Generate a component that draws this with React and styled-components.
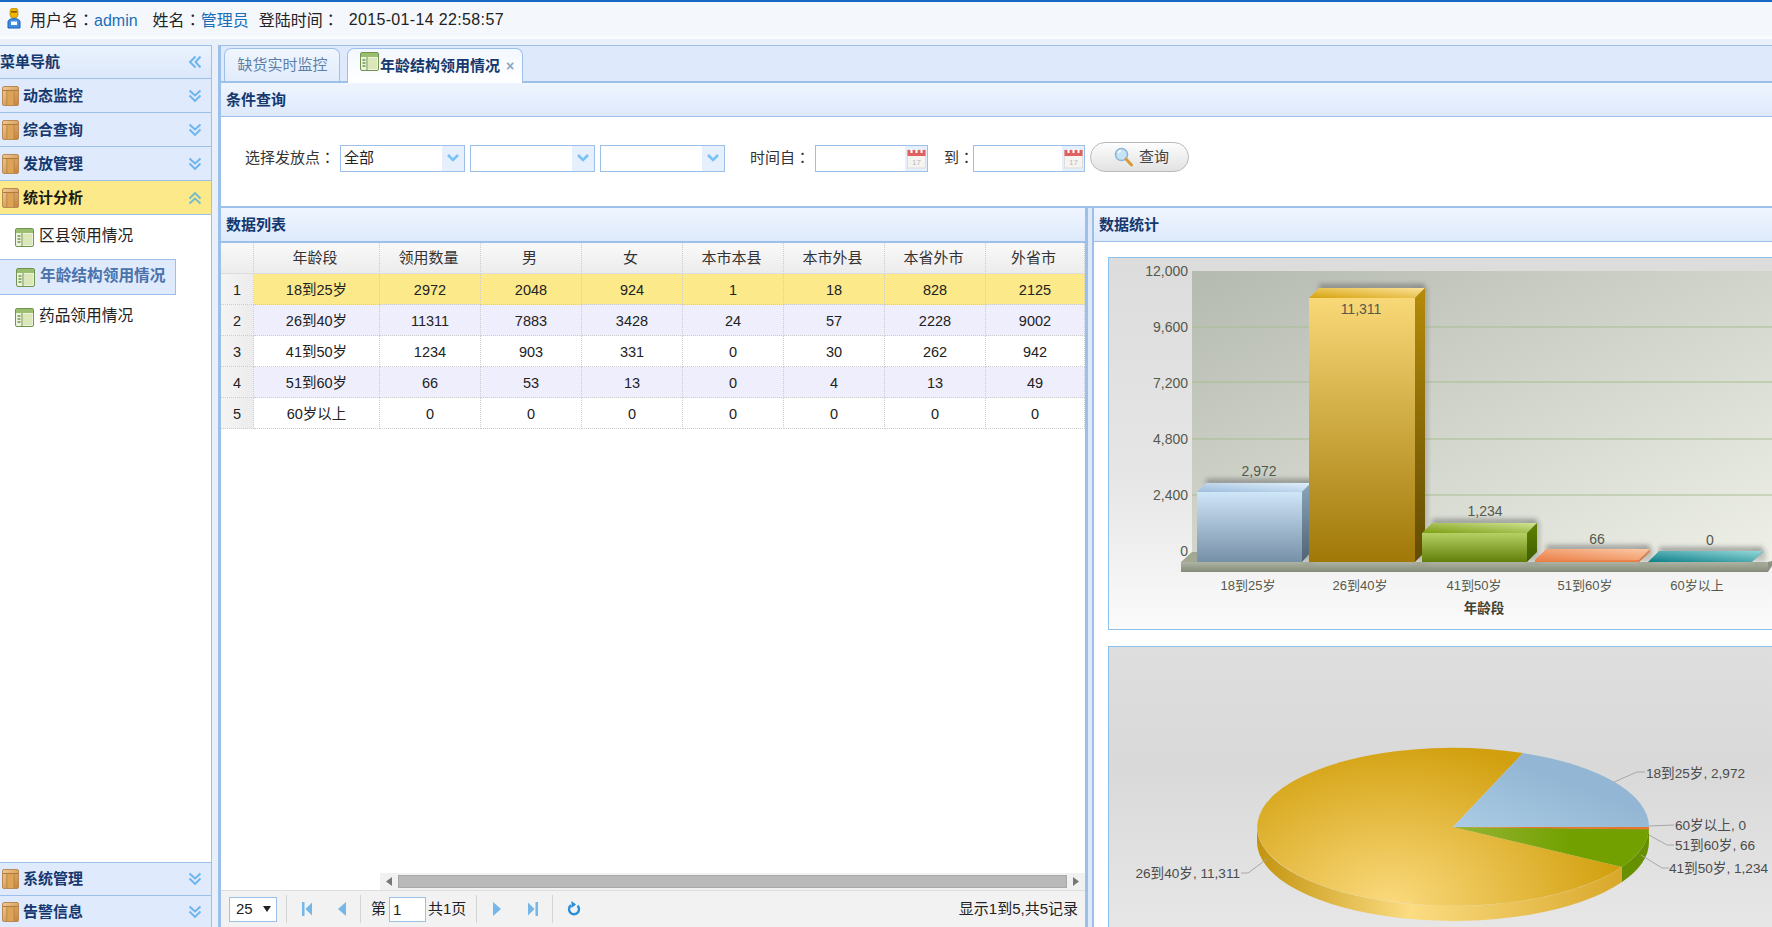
import React from "react";
import styled, { createGlobalStyle } from "styled-components";

const GlobalStyle = createGlobalStyle`
  html, body {
    margin: 0;
    padding: 0;
    background: #e9f0f9;
    overflow: hidden;
  }
  * {
    box-sizing: border-box;
  }
`;

const LINE = "#9dc0ea";
const FONT = `"Liberation Sans", "Noto Sans CJK SC", sans-serif`;

// 表格数据
const columns = ["年龄段", "领用数量", "男", "女", "本市本县", "本市外县", "本省外市", "外省市"];
const rows = [
  ["18到25岁", 2972, 2048, 924, 1, 18, 828, 2125],
  ["26到40岁", 11311, 7883, 3428, 24, 57, 2228, 9002],
  ["41到50岁", 1234, 903, 331, 0, 30, 262, 942],
  ["51到60岁", 66, 53, 13, 0, 4, 13, 49],
  ["60岁以上", 0, 0, 0, 0, 0, 0, 0],
];

const Page = styled.div`
  width: 1772px;
  height: 927px;
  display: flex;
  flex-direction: column;
  overflow: hidden;
  font-family: ${FONT};
  line-height: 20px;
  color: #222;
  background: #e9f0f9;
`;

const TopBar = styled.div`
  height: 39px;
  flex: none;
  display: flex;
  align-items: center;
  padding: 2px 0 0 7px;
  font-size: 16px;
  background: #f4f8fc;
  border-top: 2px solid #1668c4;
  border-bottom: 3px solid #fbfcfe;
`;

const TopIcon = styled.span`
  display: flex;
  margin-top: -4px;
`;

const TopText = styled.span`
  margin-left: ${(p) => p.$ml || 0}px;
  white-space: pre;
  letter-spacing: ${(p) => p.$track || 0}px;
`;

const TopLink = styled.span`
  color: #1c6db8;
`;

// 全角冒号居中显示
const Colon = styled.span`
  font-family: "Noto Sans CJK TC", sans-serif;
`;

const Layout = styled.div`
  flex: 1;
  display: flex;
  min-height: 0;
  padding-top: 6px;
`;

const Sidebar = styled.aside`
  width: 212px;
  flex: none;
  display: flex;
  flex-direction: column;
  background: #fff;
  border-right: 1px solid ${LINE};
  overflow: hidden;
`;

const SideHead = styled.div`
  height: 34px;
  flex: none;
  display: flex;
  align-items: center;
  justify-content: space-between;
  padding: 0 9px 0 0;
  font-size: 15px;
  font-weight: bold;
  color: #15386e;
  background: linear-gradient(#eaf2fe, #dbe8fb);
  border-top: 1px solid ${LINE};
  border-bottom: 1px solid ${LINE};
`;

const SideRow = styled.div`
  height: ${(p) => p.$h || 34}px;
  flex: none;
  display: flex;
  align-items: center;
  padding: 0 9px 0 2px;
  font-size: 15px;
  font-weight: bold;
  color: ${(p) => (p.$open ? "#1b1b10" : "#15386e")};
  background: ${(p) => (p.$open ? "#fbe98a" : "#dfeafc")};
  border-bottom: 1px solid ${LINE};
`;

const SideTitle = styled.span`
  flex: 1;
  margin-left: 4px;
`;

const MenuList = styled.div`
  flex: 1;
  display: flex;
  flex-direction: column;
  gap: 4px;
  padding-top: 4px;
`;

const BottomGroup = styled.div`
  flex: none;
  height: 65px;
  border-top: 1px solid ${LINE};
`;

const MenuItem = styled.div`
  width: 176px;
  height: 36px;
  display: flex;
  align-items: center;
  gap: 5px;
  padding: 0 0 2px ${(p) => (p.$active ? 16 : 15)}px;
  font-size: 15.7px;
  font-weight: ${(p) => (p.$active ? "bold" : "normal")};
  color: ${(p) => (p.$active ? "#4a72ab" : "#222")};
  background: ${(p) => (p.$active ? "#dfeafc" : "transparent")};
  border: 1px solid ${(p) => (p.$active ? LINE : "transparent")};
  border-left: none;
`;

const MenuIcon = styled.span`
  display: flex;
  margin-top: 2px;
`;

const Main = styled.main`
  flex: 1;
  min-width: 0;
  margin-left: 6px;
  display: flex;
  flex-direction: column;
  background: #fff;
  border-left: 3px solid ${LINE};
`;

const TabStrip = styled.div`
  height: 38px;
  flex: none;
  display: flex;
  align-items: flex-start;
  gap: 7px;
  padding: 2px 0 0 3px;
  background: #deeafc;
  border-top: 1px solid ${LINE};
  border-bottom: 2px solid ${LINE};
`;

const Tab = styled.div`
  height: ${(p) => (p.$active ? 35 : 33)}px;
  width: ${(p) => (p.$active ? 176 : 116)}px;
  display: flex;
  align-items: center;
  justify-content: ${(p) => (p.$active ? "flex-start" : "center")};
  padding-left: ${(p) => (p.$active ? 12 : 1)}px;
  font-size: 15px;
  font-weight: ${(p) => (p.$active ? "bold" : "normal")};
  color: ${(p) => (p.$active ? "#15386e" : "#5c7fa8")};
  background: ${(p) => (p.$active ? "linear-gradient(#f3f8ff, #fff)" : "linear-gradient(#f0f6fe, #e0ebfb)")};
  border: 1px solid ${LINE};
  border-bottom: none;
  border-radius: 7px 7px 0 0;
  position: relative;
  z-index: 1;
`;

const TabIcon = styled.span`
  display: flex;
  margin-top: -9px;
  margin-right: 1px;
`;

const TabClose = styled.span`
  margin-left: 6px;
  font-size: 14px;
  font-weight: bold;
  color: #8ba5c4;
`;

const PanelHead = styled.div`
  height: ${(p) => (p.$thick ? 35 : 34)}px;
  flex: none;
  display: flex;
  align-items: center;
  padding-left: 5px;
  font-size: 15px;
  font-weight: bold;
  color: #15386e;
  background: linear-gradient(#eff5fe, #dde9fb);
  border-bottom: ${(p) => (p.$thick ? 2 : 1)}px solid ${LINE};
`;

const QueryForm = styled.div`
  height: 89px;
  flex: none;
  display: flex;
  align-items: center;
  gap: 5px;
  padding: 0 0 7px 24px;
`;

const FieldLabel = styled.label`
  margin-left: ${(p) => p.$ml || 0}px;
  margin-top: -1px;
  font-size: 15px;
  color: #333;
  white-space: nowrap;
`;

const Combo = styled.div`
  width: 125px;
  height: 27px;
  display: flex;
  align-items: center;
  justify-content: space-between;
  padding-left: 3px;
  font-size: 15px;
  background: #fff;
  border: 1px solid ${LINE};
`;

const ComboArrow = styled.span`
  width: 22px;
  height: 100%;
  display: flex;
  align-items: center;
  justify-content: center;
  background: #e6effc;
`;

const DateBox = styled.div`
  width: ${(p) => p.$w}px;
  height: 27px;
  margin-left: ${(p) => p.$ml || 0}px;
  display: flex;
  justify-content: flex-end;
  background: #fff;
  border: 1px solid ${LINE};
`;

const DateIcon = styled.span`
  width: 22px;
  display: flex;
  align-items: center;
  justify-content: center;
  background: #e6effc;
`;

const QueryButton = styled.button`
  width: 99px;
  height: 30px;
  margin: -3px 0 0 0;
  display: flex;
  align-items: center;
  justify-content: center;
  gap: 6px;
  padding: 0 0 0 4px;
  font-family: ${FONT};
  font-size: 15px;
  line-height: 20px;
  color: #444;
  background: linear-gradient(#fdfdfd, #e2e2e2);
  border: 1px solid #b9b9b9;
  border-radius: 15px;
`;

const Split = styled.div`
  flex: 1;
  min-height: 0;
  display: flex;
  background: #dfe9f7;
  border-top: 2px solid ${LINE};
`;

const ListPanel = styled.section`
  width: 867px;
  flex: none;
  display: flex;
  flex-direction: column;
  background: #fff;
  border-right: 3px solid ${LINE};
`;

const StatPanel = styled.section`
  flex: 1;
  min-width: 0;
  margin-left: 4px;
  display: flex;
  flex-direction: column;
  overflow: hidden;
  background: #fff;
  border-left: 2px solid ${LINE};
`;

const StatBody = styled.div`
  flex: 1;
  display: flex;
  flex-direction: column;
  gap: 16px;
  padding: 15px 0 0 14px;
`;

const ChartFrame = styled.div`
  width: 700px;
  height: ${(p) => p.$h}px;
  flex: none;
  background: ${(p) => p.$bg};
  border: 1px solid #8ac0ea;
`;

const ChartSvg = styled.svg`
  display: block;
`;

const GridBody = styled.div`
  flex: 1;
  min-height: 0;
`;

const Table = styled.table`
  width: 864px;
  table-layout: fixed;
  border-collapse: separate;
  border-spacing: 0;
  font-size: 14.5px;
  line-height: 20px;
`;

const Th = styled.th`
  width: ${(p) => p.$w}px;
  height: 31px;
  padding: 0 3px 0 0;
  font-weight: normal;
  font-size: 15px;
  color: #333;
  background: linear-gradient(#f9f9f9, #ececec);
  border-right: 1px dotted #ccc;
  border-bottom: 1px solid #ddd;
`;

const Td = styled.td`
  height: 31px;
  padding: 1px 0 0;
  text-align: center;
  color: #222;
  background: ${(p) => (p.$selected ? "#fbe98a" : p.$alt ? "#eeeefd" : "#fff")};
  border-right: 1px dotted #ccc;
  border-bottom: 1px dotted #ccc;
`;

const RowNum = styled(Td)`
  background: linear-gradient(90deg, #f4f4f4, #ececec);
`;

const ScrollBar = styled.div`
  height: 17px;
  flex: none;
  margin-left: 159px;
  display: flex;
  align-items: center;
  justify-content: space-between;
  padding: 0 6px;
  background: #f1f1f1;
`;

const ScrollThumb = styled.div`
  width: 669px;
  height: 13px;
  background: #b9b9b9;
  border: 1px solid #a8a8a8;
`;

const Pager = styled.div`
  height: 37px;
  flex: none;
  display: flex;
  align-items: center;
  padding: 0 7px 0 8px;
  font-size: 15px;
  background: #f2f2f2;
  border-top: 1px solid #ddd;
`;

const PageSize = styled.div`
  width: 48px;
  height: 25px;
  display: flex;
  align-items: center;
  justify-content: space-between;
  padding: 0 5px 0 6px;
  font-size: 15px;
  background: #fff;
  border: 1px solid ${LINE};
`;

const PagerSep = styled.span`
  width: 1px;
  height: 28px;
  flex: none;
  margin-left: ${(p) => p.$ml || 0}px;
  background: #d4d4d4;
`;

const PagerButton = styled.span`
  width: 36px;
  display: flex;
  justify-content: center;
`;

const PagerGroup = styled.div`
  width: ${(p) => p.$w}px;
  display: flex;
  align-items: center;
  padding-left: ${(p) => p.$pl || 0}px;
`;

const PageInput = styled.div`
  width: 37px;
  height: 25px;
  margin: 0 2px 0 3px;
  padding-left: 3px;
  line-height: 23px;
  background: #fff;
  border: 1px solid ${LINE};
`;

const PagerInfo = styled.div`
  margin-left: auto;
  white-space: nowrap;
`;

// 小图标
const UserIcon = () => (
  <svg width="14" height="21" viewBox="0 0 14 21">
    <path d="M3 3a4 3 0 0 1 8 0v4a4 3 0 0 1-8 0z" fill="#f0b400" stroke="#a87a00" strokeWidth=".6" />
    <rect x="4" y="3" width="6" height="1.6" fill="#8a5a00" />
    <path d="M1 20v-6c0-2 2-3.4 6-3.4s6 1.4 6 3.4v6z" fill="#3d8de0" stroke="#1c5fb0" />
    <rect x="4" y="13.5" width="6" height="3.5" fill="#fff" />
  </svg>
);

const BookIcon = () => (
  <svg width="17" height="20" viewBox="0 0 17 20">
    <defs>
      <linearGradient id="bookFill" x1="0" y1="0" x2="1" y2="1">
        <stop offset="0" stopColor="#f2cb94" />
        <stop offset="1" stopColor="#c4823c" />
      </linearGradient>
    </defs>
    <rect x=".5" y=".5" width="16" height="19" rx="1.5" fill="url(#bookFill)" stroke="#b98a55" />
    <path d="M1 4.5h15" stroke="#b07a3c" />
    <path d="M5 5v14M12 5v14" stroke="#b17a3a" />
    <rect x="5.5" y="5" width="6" height="14" fill="#dda455" />
  </svg>
);

const TableIcon = ({ size = 19 }) => (
  <svg width={size} height={size} viewBox="0 0 19 19">
    <rect x=".5" y=".5" width="18" height="18" rx="1.5" fill="#eef4dc" stroke="#6f9352" />
    <rect x="1" y="1" width="17" height="4" fill="#9bbd6e" />
    <path d="M7 5v13" stroke="#6f9352" />
    <path d="M2.5 8h3M2.5 11h3M2.5 14h3" stroke="#6f9352" strokeWidth="1.4" />
    <rect x="8" y="6" width="9" height="11" fill="#dbe7b8" />
  </svg>
);

const Chevrons = ({ dir = "down", color = "#6bb4ef" }) => {
  const turn = { down: 0, up: 180, left: 90 }[dir];
  return (
    <svg width="14" height="14" viewBox="0 0 14 14">
      <g transform={`rotate(${turn} 7 7)`} fill="none" stroke={color} strokeWidth="1.9">
        <path d="M1.5 1.5 7 6.5l5.5-5" />
        <path d="M1.5 6.5 7 12l5.5-5.5" />
      </g>
    </svg>
  );
};

const ComboChevron = () => (
  <svg width="14" height="10" viewBox="0 0 14 10">
    <path d="M2 2l5 5 5-5" fill="none" stroke="#78c2f4" strokeWidth="2.6" />
  </svg>
);

const CalendarIcon = () => (
  <svg width="19" height="21" viewBox="0 0 19 21">
    <rect x=".5" y="2" width="18" height="18" fill="#f6f4f0" stroke="#ddd" />
    <rect x=".5" y="2" width="18" height="6" fill="#e25f5f" />
    <path d="M4.5 1v4M9.5 1v4M14.5 1v4" stroke="#fff" strokeWidth="2" />
    <text x="5" y="17" fontSize="8" fill="#b9b9b9" fontFamily="Liberation Sans, sans-serif">17</text>
  </svg>
);

const SearchIcon = () => (
  <svg width="19" height="20" viewBox="0 0 19 20">
    <circle cx="7.5" cy="7.5" r="6" fill="#c5e4f8" stroke="#8cb6d8" strokeWidth="1.6" />
    <path d="M4 6a4 4 0 0 1 3-2.5" fill="none" stroke="#fff" strokeWidth="1.6" />
    <path d="M12 12l5.5 6" stroke="#d89a3c" strokeWidth="3" strokeLinecap="round" />
  </svg>
);

const PageArrow = ({ last, flip, color = "#74b7e8" }) => (
  <svg width="12" height="16" viewBox="0 0 12 16">
    <g fill={color} transform={flip ? "matrix(-1 0 0 1 12 0)" : undefined}>
      <path d={last ? "M1 1.5v13L7.5 8z" : "M2 1v14L10 8z"} />
      {last && <rect x="8.5" y="1" width="2.5" height="14" />}
    </g>
  </svg>
);

const RefreshIcon = () => (
  <svg width="14" height="16" viewBox="0 0 14 16">
    <path d="M10.5 4.6A5 5 0 1 1 4 4.2" fill="none" stroke="#2a8fd6" strokeWidth="2.4" />
    <path d="M4.5 0v7L9 3.5z" fill="#2a8fd6" />
  </svg>
);

const ScrollArrow = ({ flip }) => (
  <svg width="6" height="9" viewBox="0 0 6 9">
    <path d={flip ? "M6 0v9L0 4.5z" : "M0 0v9l6-4.5z"} fill="#777" />
  </svg>
);

// 柱状图，坐标沿用页面坐标
const axisLabels = [["12,000", 276], ["9,600", 332], ["7,200", 388], ["4,800", 444], ["2,400", 500], ["0", 556]];
const barLabels = [["2,972", 1259, 476], ["11,311", 1361, 314], ["1,234", 1485, 516], ["66", 1597, 544], ["0", 1710, 545]];
const catLabels = [["18到25岁", 1248], ["26到40岁", 1360], ["41到50岁", 1474], ["51到60岁", 1585], ["60岁以上", 1697]];

const bars = [
  { id: "a", x: 1197, w: 105, d: 9, top: 492, front: ["#cfe5f8", "#7690a8"], lid: ["#9dbddc", "#e0effb"], side: ["#8aa5bd", "#4f6372"] },
  { id: "b", x: 1309, w: 106, d: 10, top: 298, front: ["#f9d877", "#a07808"], lid: ["#d6a30e", "#fde39a"], side: ["#b58b08", "#624c05"] },
  { id: "c", x: 1422, w: 105, d: 10, top: 533, front: ["#b5d165", "#617f08"], lid: ["#7c9e12", "#cfe394"], side: ["#5d8300", "#3f5c00"] },
  { id: "d", x: 1535, w: 104, d: 11, top: 560, front: ["#ee8a50", "#e67a40"], lid: ["#e9814a", "#fdc8a4"], side: ["#e9905c", "#c56a35"] },
  { id: "e", x: 1648, w: 104, d: 11, top: 562, front: ["#0d7f88", "#0d7f88"], lid: ["#0d7f88", "#95d8da"], side: ["#5fb5b9", "#3f9297"] },
];

const BarChart = () => (
  <ChartSvg width="698" height="371" viewBox="1109 258 698 371" fontFamily={FONT}>
    <defs>
      <linearGradient id="wall" x1="0" y1="0" x2="1" y2="1">
        <stop offset="0" stopColor="#b5bab0" />
        <stop offset="1" stopColor="#f0f2ea" />
      </linearGradient>
      <linearGradient id="floor" x1="0" y1="0" x2="0" y2="1">
        <stop offset="0" stopColor="#aeb3a3" />
        <stop offset="1" stopColor="#858b78" />
      </linearGradient>
      <filter id="soft" x="-20%" y="-100%" width="140%" height="300%">
        <feGaussianBlur stdDeviation="2.5" />
      </filter>
      {bars.map((b) => (
        <React.Fragment key={b.id}>
          <linearGradient id={`front-${b.id}`} x1="0" y1="0" x2="0" y2="1">
            <stop offset="0" stopColor={b.front[0]} />
            <stop offset="1" stopColor={b.front[1]} />
          </linearGradient>
          <linearGradient id={`lid-${b.id}`} x1="0" y1="1" x2="1" y2="0">
            <stop offset="0" stopColor={b.lid[0]} />
            <stop offset="1" stopColor={b.lid[1]} />
          </linearGradient>
          <linearGradient id={`side-${b.id}`} x1="0" y1="0" x2="0" y2="1">
            <stop offset="0" stopColor={b.side[0]} />
            <stop offset="1" stopColor={b.side[1]} />
          </linearGradient>
        </React.Fragment>
      ))}
    </defs>
    <rect x="1192" y="271" width="615" height="291" fill="url(#wall)" />
    {[327, 382, 439, 495].map((y) => (
      <path key={y} d={`M1192 ${y}H1807`} stroke="#a9bd90" />
    ))}
    <path d="M1181 562l11-10h5v10z" fill="#a3a892" />
    <path d="M1768 572l4-6v-5l-4 1z" fill="#8d9280" />
    <rect x="1181" y="562" width="587" height="10" fill="url(#floor)" />
    {bars.map((b) => (
      <g key={b.id}>
        <rect x={b.x + b.d} y={b.top - b.d - 4} width={b.w} height="6" fill="#555" opacity=".5" filter="url(#soft)" />
        <rect x={b.x + b.w} y={b.top - b.d} width={b.d + 3} height={562 - b.top + b.d} fill="#666" opacity=".3" filter="url(#soft)" />
        <path d={`M${b.x} ${b.top}l${b.d} -${b.d}h${b.w}l-${b.d} ${b.d}z`} fill={`url(#lid-${b.id})`} />
        <path d={`M${b.x + b.w} ${b.top}l${b.d} -${b.d}V552l-${b.d} 10z`} fill={`url(#side-${b.id})`} />
        <rect x={b.x} y={b.top} width={b.w} height={562 - b.top} fill={`url(#front-${b.id})`} />
      </g>
    ))}
    <g fontSize="14" fill="#55594c">
      {axisLabels.map(([t, y]) => (
        <text key={t} x="1188" y={y} textAnchor="end">{t}</text>
      ))}
      {barLabels.map(([t, x, y]) => (
        <text key={t + x} x={x} y={y} textAnchor="middle">{t}</text>
      ))}
      {catLabels.map(([t, x]) => (
        <text key={t} x={x} y="590" fontSize="13" textAnchor="middle">{t}</text>
      ))}
      <text x="1484" y="613" fontSize="13.5" textAnchor="middle" fontWeight="bold" fill="#3f4435">年龄段</text>
    </g>
  </ChartSvg>
);

const pieLabels = [
  ["18到25岁, 2,972", 1646, 778, "start"],
  ["60岁以上, 0", 1675, 830, "start"],
  ["51到60岁, 66", 1675, 850, "start"],
  ["41到50岁, 1,234", 1669, 873, "start"],
  ["26到40岁, 11,311", 1240, 878, "end"],
];

const PieChart = () => (
  <ChartSvg width="698" height="281" viewBox="1109 647 698 281" fontFamily={FONT}>
    <defs>
      <radialGradient id="pieGold" gradientUnits="userSpaceOnUse" cx="1390" cy="905" r="230" gradientTransform="matrix(1 0 0 .72 0 253)">
        <stop offset="0" stopColor="#fbda7e" />
        <stop offset="1" stopColor="#d2a00f" />
      </radialGradient>
      <linearGradient id="pieSide" x1="0" y1="0" x2="1" y2="0">
        <stop offset="0" stopColor="#c4940f" />
        <stop offset=".42" stopColor="#fbdc82" />
        <stop offset="1" stopColor="#d9a82a" />
      </linearGradient>
      <linearGradient id="pieBlue" x1="0" y1="1" x2="1" y2="0">
        <stop offset="0" stopColor="#aacce4" />
        <stop offset=".6" stopColor="#93b6d4" />
      </linearGradient>
      <linearGradient id="pieGreen" x1="0" y1="0" x2="1" y2="0">
        <stop offset="0" stopColor="#97b535" />
        <stop offset=".6" stopColor="#72a000" />
      </linearGradient>
    </defs>
    <path d="M1257 827A196 79 0 0 0 1622 867V882A196 79 0 0 1 1257 842Z" fill="url(#pieSide)" />
    <path d="M1622 867A196 79 0 0 0 1649 827V842A196 79 0 0 1 1622 882Z" fill="#669000" />
    <path d="M1453 827L1622 867A196 79 0 1 1 1523 753Z" fill="url(#pieGold)" />
    <path d="M1453 827L1523 753A196 79 0 0 1 1649 827Z" fill="url(#pieBlue)" />
    <path d="M1453 827L1649 829A196 79 0 0 1 1622 867Z" fill="url(#pieGreen)" />
    <path d="M1453 827H1649V829.5Z" fill="#e5782f" />
    <g fill="none" stroke="#a8a8a8">
      <path d="M1614 782l23-10h8" />
      <path d="M1649 826l25-1" />
      <path d="M1649 835l18 10h7" />
      <path d="M1641 855l21 13h7" />
      <path d="M1267 859l-19 14h-7" />
    </g>
    <g fontSize="13.6" fill="#4c4c4c">
      {pieLabels.map(([t, x, y, anchor]) => (
        <text key={t} x={x} y={y} textAnchor={anchor}>{t}</text>
      ))}
    </g>
  </ChartSvg>
);

const colWidths = [126, 101, 101, 101, 101, 101, 101, 99];

const App = () => {
  return (
    <Page>
      <GlobalStyle />
      <TopBar>
        <TopIcon><UserIcon /></TopIcon>
        <TopText $ml={9}>用户名<Colon>：</Colon><TopLink>admin</TopLink></TopText>
        <TopText $ml={15}>姓名<Colon>：</Colon><TopLink>管理员</TopLink></TopText>
        <TopText $ml={10}>登陆时间<Colon>：</Colon></TopText>
        <TopText $ml={10} $track={0.35}>2015-01-14 22:58:57</TopText>
      </TopBar>
      <Layout>
        <Sidebar>
          <SideHead>
            菜单导航
            <Chevrons dir="left" />
          </SideHead>
          {["动态监控", "综合查询", "发放管理"].map((name) => (
            <SideRow key={name}>
              <BookIcon />
              <SideTitle>{name}</SideTitle>
              <Chevrons />
            </SideRow>
          ))}
          <SideRow $open>
            <BookIcon />
            <SideTitle>统计分析</SideTitle>
            <Chevrons dir="up" color="#74bccb" />
          </SideRow>
          <MenuList>
            <MenuItem><MenuIcon><TableIcon /></MenuIcon>区县领用情况</MenuItem>
            <MenuItem $active><MenuIcon><TableIcon /></MenuIcon>年龄结构领用情况</MenuItem>
            <MenuItem><MenuIcon><TableIcon /></MenuIcon>药品领用情况</MenuItem>
          </MenuList>
          <BottomGroup>
            <SideRow $h={33}>
              <BookIcon />
              <SideTitle>系统管理</SideTitle>
              <Chevrons />
            </SideRow>
            <SideRow $h={33}>
              <BookIcon />
              <SideTitle>告警信息</SideTitle>
              <Chevrons />
            </SideRow>
          </BottomGroup>
        </Sidebar>
        <Main>
          <TabStrip>
            <Tab>缺货实时监控</Tab>
            <Tab $active>
              <TabIcon><TableIcon /></TabIcon>
              年龄结构领用情况
              <TabClose>×</TabClose>
            </Tab>
          </TabStrip>
          <PanelHead>条件查询</PanelHead>
          <QueryForm>
            <FieldLabel>选择发放点<Colon>：</Colon></FieldLabel>
            <Combo>全部<ComboArrow><ComboChevron /></ComboArrow></Combo>
            <Combo><span /><ComboArrow><ComboChevron /></ComboArrow></Combo>
            <Combo><span /><ComboArrow><ComboChevron /></ComboArrow></Combo>
            <FieldLabel $ml={20}>时间自<Colon>：</Colon></FieldLabel>
            <DateBox $w={113}><DateIcon><CalendarIcon /></DateIcon></DateBox>
            <FieldLabel $ml={11}>到<Colon>：</Colon></FieldLabel>
            <DateBox $w={112} $ml={-6}><DateIcon><CalendarIcon /></DateIcon></DateBox>
            <QueryButton><SearchIcon />查询</QueryButton>
          </QueryForm>
          <Split>
            <ListPanel>
              <PanelHead $thick>数据列表</PanelHead>
              <GridBody>
                <Table>
                  <thead>
                    <tr>
                      <Th $w={33} />
                      {columns.map((c, i) => (
                        <Th key={c} $w={colWidths[i]}>{c}</Th>
                      ))}
                    </tr>
                  </thead>
                  <tbody>
                    {rows.map((row, i) => (
                      <tr key={row[0]}>
                        <RowNum>{i + 1}</RowNum>
                        {row.map((v, j) => (
                          <Td key={j} $selected={i === 0} $alt={i % 2 === 1}>{v}</Td>
                        ))}
                      </tr>
                    ))}
                  </tbody>
                </Table>
              </GridBody>
              <ScrollBar>
                <ScrollArrow flip />
                <ScrollThumb />
                <ScrollArrow />
              </ScrollBar>
              <Pager>
                <PageSize>25<svg width="8" height="6" viewBox="0 0 8 6"><path d="M0 0h8L4 6z" fill="#222" /></svg></PageSize>
                <PagerSep $ml={9} />
                <PagerGroup $w={73} $pl={2}>
                  <PagerButton><PageArrow last flip /></PagerButton>
                  <PagerButton><PageArrow flip /></PagerButton>
                </PagerGroup>
                <PagerSep />
                <PagerGroup $w={115} $pl={10}>
                  第<PageInput>1</PageInput>共1页
                </PagerGroup>
                <PagerSep />
                <PagerGroup $w={75} $pl={2}>
                  <PagerButton><PageArrow /></PagerButton>
                  <PagerButton><PageArrow last /></PagerButton>
                </PagerGroup>
                <PagerSep />
                <PagerGroup $w={40} $pl={14}>
                  <RefreshIcon />
                </PagerGroup>
                <PagerInfo>显示1到5,共5记录</PagerInfo>
              </Pager>
            </ListPanel>
            <StatPanel>
              <PanelHead>数据统计</PanelHead>
              <StatBody>
                <ChartFrame $h={373} $bg="linear-gradient(#dcdcdc, #e6e6e6 60%, #fbfbfb)">
                  <BarChart />
                </ChartFrame>
                <ChartFrame $h={300} $bg="linear-gradient(#dedede, #d9d9d9 40%, #e8e8e8)">
                  <PieChart />
                </ChartFrame>
              </StatBody>
            </StatPanel>
          </Split>
        </Main>
      </Layout>
    </Page>
  );
};

export default App;
